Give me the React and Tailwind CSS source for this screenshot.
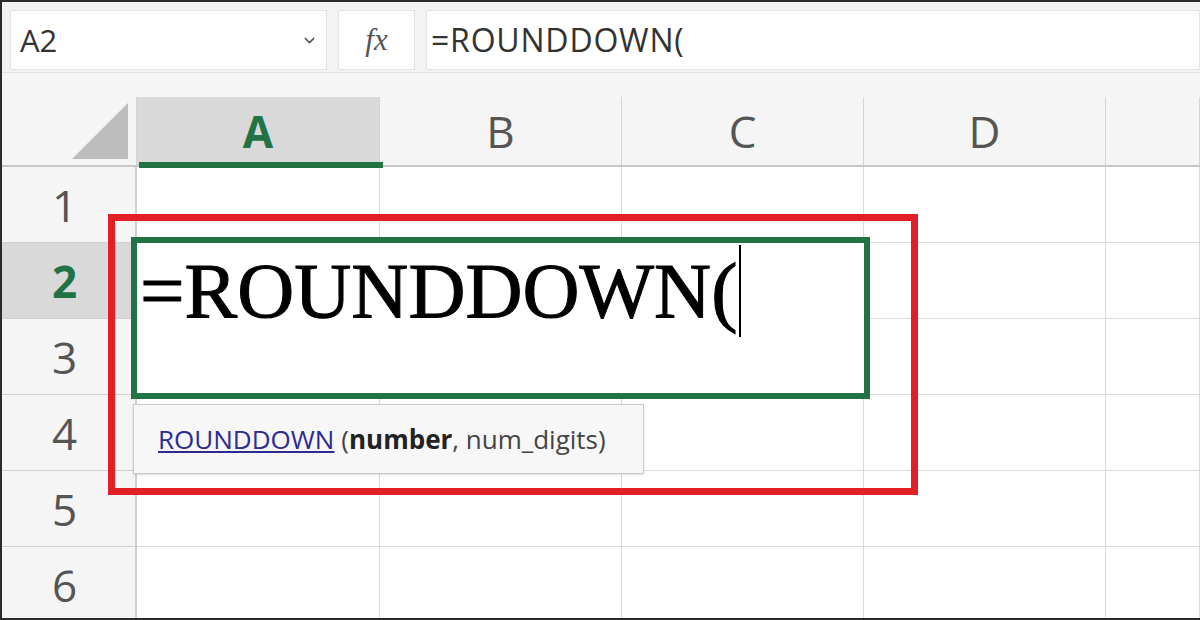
import React from "react";
import { ChevronDown } from "lucide-react";

const COLS = ["A", "B", "C", "D", ""];
const ROWS = [1, 2, 3, 4, 5, 6];

function HeaderCell({ label }) {
  const active = label === "A";
  return (
    <div
      className={`relative flex items-center justify-center border-r border-[#d4d4d4] ${
        active ? "bg-[#d9d9d9] text-[#217346] font-bold" : "text-[#555]"
      }`}
    >
      {label}
      {active && (
        <div className="absolute left-[2px] right-[-4px] bottom-[-3px] h-[6px] bg-[#217346]" />
      )}
    </div>
  );
}

function Row({ n }) {
  const active = n === 2;
  return (
    <>
      <div
        className={`flex items-center justify-center pr-2 border-r-2 border-b border-[#d0d0d0] text-[44px] ${
          active ? "bg-[#d9d9d9] text-[#217346] font-bold" : "bg-[#f5f5f5] text-[#555]"
        }`}
      >
        {n}
      </div>
      {COLS.map((c, i) => (
        <div key={i} className="border-r border-b border-[#dadada]" />
      ))}
    </>
  );
}

export default function App() {
  return (
    <div className="relative w-[1200px] h-[620px] overflow-hidden bg-white border-l-2 border-t-2 border-b-2 border-[#2b2b2b] font-['Open_Sans',sans-serif]">
      {/* Formula bar */}
      <div className="flex gap-[11px] h-[71px] pt-2 pl-2 bg-[#f3f3f3] border-b border-[#e2e2e2]">
        <div className="flex items-center justify-between w-[317px] h-[60px] pl-[9px] pr-[8px] bg-white border border-[#e4e4e4] text-[31px] text-[#333]">
          A2
          <ChevronDown size={17} strokeWidth={2} className="text-[#555]" />
        </div>
        <div className="flex items-center justify-center w-[77px] h-[60px] bg-white border border-[#e4e4e4] font-['Liberation_Serif',serif] italic text-[31px] text-[#555]">
          fx
        </div>
        <div className="flex items-center flex-1 h-[60px] pl-[4px] bg-white border border-[#e4e4e4] text-[32px] tracking-[0.8px] text-[#333]">
          =ROUNDDOWN(
        </div>
      </div>

      {/* Column headers */}
      <div className="bg-[#f5f5f5] pt-[24px] border-b-2 border-[#c8c8c8]">
        <div className="grid grid-cols-[135px_243px_242px_242px_242px_1fr] h-[68px] text-[44px]">
          <div className="flex items-end justify-end pr-[8px] pb-[6px] border-r border-[#d4d4d4]">
            <svg width="56" height="56" viewBox="0 0 56 56">
              <polygon points="56,0 56,56 0,56" fill="#bdbdbd" />
            </svg>
          </div>
          {COLS.map((c, i) => (
            <HeaderCell key={i} label={c} />
          ))}
        </div>
      </div>

      {/* Cells */}
      <div className="grid grid-cols-[135px_243px_242px_242px_242px_1fr] auto-rows-[76px]">
        {ROWS.map((n) => (
          <Row key={n} n={n} />
        ))}
      </div>

      {/* Highlight box */}
      <div className="absolute left-[106px] top-[212px] w-[810px] h-[281px] border-[7px] border-[#e21f26]" />

      {/* In-cell editor */}
      <div className="absolute left-[129px] top-[235px] w-[739px] h-[162px] border-[6px] border-[#217346] bg-white">
        <div className="flex items-start pl-[3px] pt-[2px]">
          <span className="mt-[6px] font-['Liberation_Serif',serif] text-[79px] leading-none text-black [-webkit-text-stroke:1px_black]">
            =ROUNDDOWN(
          </span>
          <span className="w-[2px] h-[92px] ml-[2px] bg-black" />
        </div>
      </div>

      {/* Function tooltip */}
      <div className="absolute left-[131px] top-[402px] flex items-center w-[511px] h-[70px] pl-[24px] bg-[#f7f7f7] border border-[#c9c9c9] shadow-sm text-[26px] text-[#444]">
        <span className="text-[#2b2b95] underline underline-offset-2">ROUNDDOWN</span>
        <span className="ml-[7px]">
          (<b className="text-[#222]">number</b>, num_digits)
        </span>
      </div>
    </div>
  );
}
